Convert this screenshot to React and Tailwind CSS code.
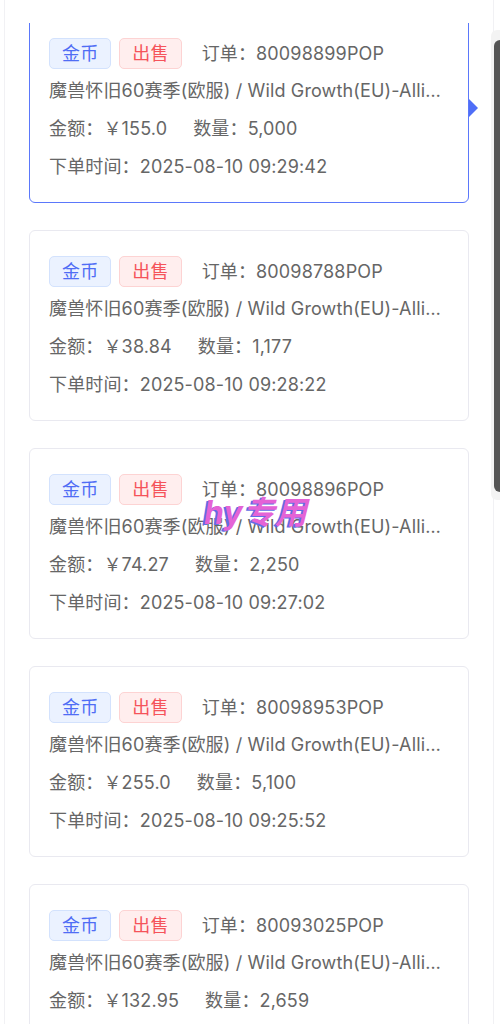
import React from 'react';

const orders = [
  { id: '80098899POP', amount: '155.0', qty: '5,000', time: '2025-08-10 09:29:42', active: true },
  { id: '80098788POP', amount: '38.84', qty: '1,177', time: '2025-08-10 09:28:22' },
  { id: '80098896POP', amount: '74.27', qty: '2,250', time: '2025-08-10 09:27:02' },
  { id: '80098953POP', amount: '255.0', qty: '5,100', time: '2025-08-10 09:25:52' },
  { id: '80093025POP', amount: '132.95', qty: '2,659', time: '2025-08-10 09:24:32' },
];

const OrderCard = ({ order }) => (
  <div
    className={`relative shrink-0 rounded-[6px] bg-white pl-[19px] pr-[19px] pt-[25px] pb-[16px] border ${
      order.active ? 'border-[#5b78fb]' : 'border-[#e9e9f0]'
    }`}
  >
    <div className="flex items-center h-[31px]">
      <span className="h-[31px] px-[12px] flex items-center rounded-[5px] border border-[#d3e2fd] bg-[#ebf2ff] text-[#4f6df5]">
        金币
      </span>
      <span className="ml-[8px] h-[31px] px-[12px] flex items-center rounded-[5px] border border-[#fdd3d3] bg-[#ffeeee] text-[#f5535a]">
        出售
      </span>
      <span className="ml-[20px]">订单：{order.id}</span>
    </div>
    <div className="mt-[3px] leading-[38px] truncate">
      魔兽怀旧60赛季(欧服) / Wild Growth(EU)-Alliance
    </div>
    <div className="leading-[38px] flex">
      <span>金额：￥{order.amount}</span>
      <span className="ml-[26px]">数量：{order.qty}</span>
    </div>
    <div className="leading-[38px]">下单时间：{order.time}</div>

    {order.active && (
      <svg
        className="absolute right-[-10px] top-[86px]"
        width="9"
        height="18"
        viewBox="0 0 9 18"
      >
        <path d="M0 0 L9 9 L0 18 Z" fill="#4f6ef7" />
      </svg>
    )}
  </div>
);

export default function App() {
  return (
    <div
      className="relative w-[500px] h-[1024px] overflow-hidden bg-white text-[18px] tracking-[0.15px] text-[#666]"
      style={{ fontFamily: 'Inter, "Noto Sans CJK SC", sans-serif' }}
    >
      <div className="ml-[4px] w-[490px] h-full border-x border-[#f1f1f4] pt-[23px]">
        <div className="h-full overflow-hidden">
          <div className="-mt-[11px] pl-[24px] pr-[24px] flex flex-col gap-[27px]">
            {orders.map((o) => (
              <OrderCard key={o.id} order={o} />
            ))}
          </div>
        </div>
      </div>

      {/* scrollbar */}
      <div className="absolute right-0 top-[30px] w-[9px] h-[470px] rounded-l-[6px] bg-[#f3f3f3]" />
      <div className="absolute right-0 top-[40px] w-[6px] h-[452px] rounded-l-[6px] bg-[#555]" />

      {/* watermark */}
      <div
        className="absolute left-[204px] top-[497px] text-[32px] font-bold italic text-[#e463d6] leading-none tracking-normal"
        style={{ textShadow: '-2px 1px 0 #5f6ee6' }}
      >
        hy专用
      </div>
    </div>
  );
}
